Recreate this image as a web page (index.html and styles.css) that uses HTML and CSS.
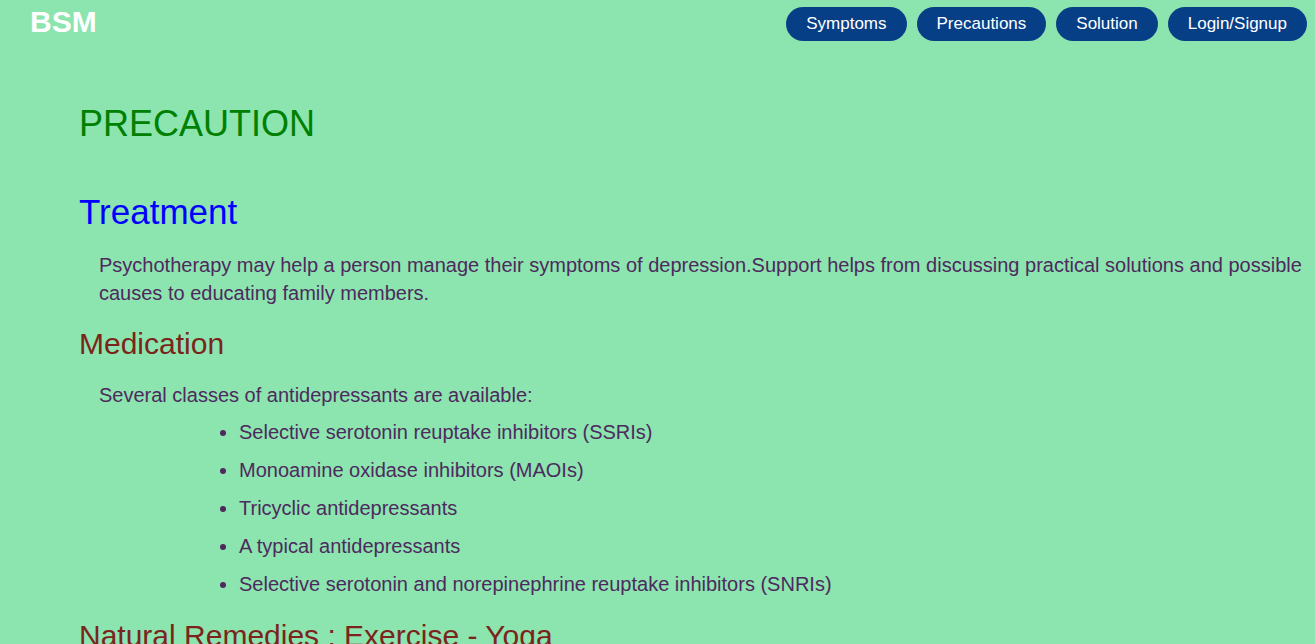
FILE: index.html
```html
<!DOCTYPE html>
<html lang="en">
<head>
<meta charset="utf-8">
<title>BSM - Precaution</title>
<link rel="stylesheet" href="styles.css">
</head>
<body>
<header class="topbar">
  <div class="logo">BSM</div>
  <nav class="nav">
    <a class="nav-btn" href="#">Symptoms</a>
    <a class="nav-btn" href="#">Precautions</a>
    <a class="nav-btn" href="#">Solution</a>
    <a class="nav-btn" href="#">Login/Signup</a>
  </nav>
</header>
<main class="content">
  <h1 class="page-title">PRECAUTION</h1>
  <h2 class="section-title">Treatment</h2>
  <p class="text">Psychotherapy may help a person manage their symptoms of depression.Support helps from discussing practical solutions and possible causes to educating family members.</p>
  <h3 class="sub-title">Medication</h3>
  <p class="text text-lead">Several classes of antidepressants are available:</p>
  <ul class="list">
    <li>Selective serotonin reuptake inhibitors (SSRIs)</li>
    <li>Monoamine oxidase inhibitors (MAOIs)</li>
    <li>Tricyclic antidepressants</li>
    <li>A typical antidepressants</li>
    <li>Selective serotonin and norepinephrine reuptake inhibitors (SNRIs)</li>
  </ul>
  <h3 class="sub-title sub-title-last">Natural Remedies : Exercise - Yoga</h3>
</main>
</body>
</html>
```

FILE: styles.css
```css
html, body {
  margin: 0;
  padding: 0;
}
body {
  background: #8ce4af;
  font-family: "Liberation Sans", Arial, sans-serif;
}
.topbar {
  display: flex;
  justify-content: space-between;
  align-items: center;
  padding: 7px 8px 0 30px;
  height: 34px;
}
.logo {
  color: #ffffff;
  font-weight: bold;
  font-size: 30px;
  line-height: 34px;
  margin-top: -4px;
}
.nav {
  display: flex;
  gap: 10px;
}
.nav-btn {
  display: block;
  height: 34px;
  line-height: 34px;
  padding: 0 20px;
  border-radius: 17px;
  background: #073f87;
  color: #ffffff;
  font-size: 17px;
  text-decoration: none;
}
.content {
  padding: 0 0 0 80px;
}
.page-title {
  margin: 62px 0 0 -1px;
  font-size: 36px;
  font-weight: normal;
  color: #008000;
  line-height: 41px;
}
.section-title {
  margin: 48px 0 0 -1px;
  font-size: 35px;
  font-weight: normal;
  color: #0000ff;
  line-height: 40px;
}
.text {
  margin: 19px 0 0 0;
  padding-left: 19px;
  font-size: 20px;
  line-height: 28px;
  color: #4d2a5e;
}
.text-lead {
  margin-top: 20px;
}
.sub-title {
  margin: 20px 0 0 -1px;
  font-size: 30px;
  font-weight: normal;
  color: #7b241c;
  line-height: 34px;
}
.sub-title-last {
  margin-top: 21px;
}
.list {
  margin: -1px 0 0 0;
  padding-left: 159px;
  font-size: 20px;
  color: #4d2a5e;
}
.list li {
  line-height: 28px;
  margin-top: 10px;
}
```
